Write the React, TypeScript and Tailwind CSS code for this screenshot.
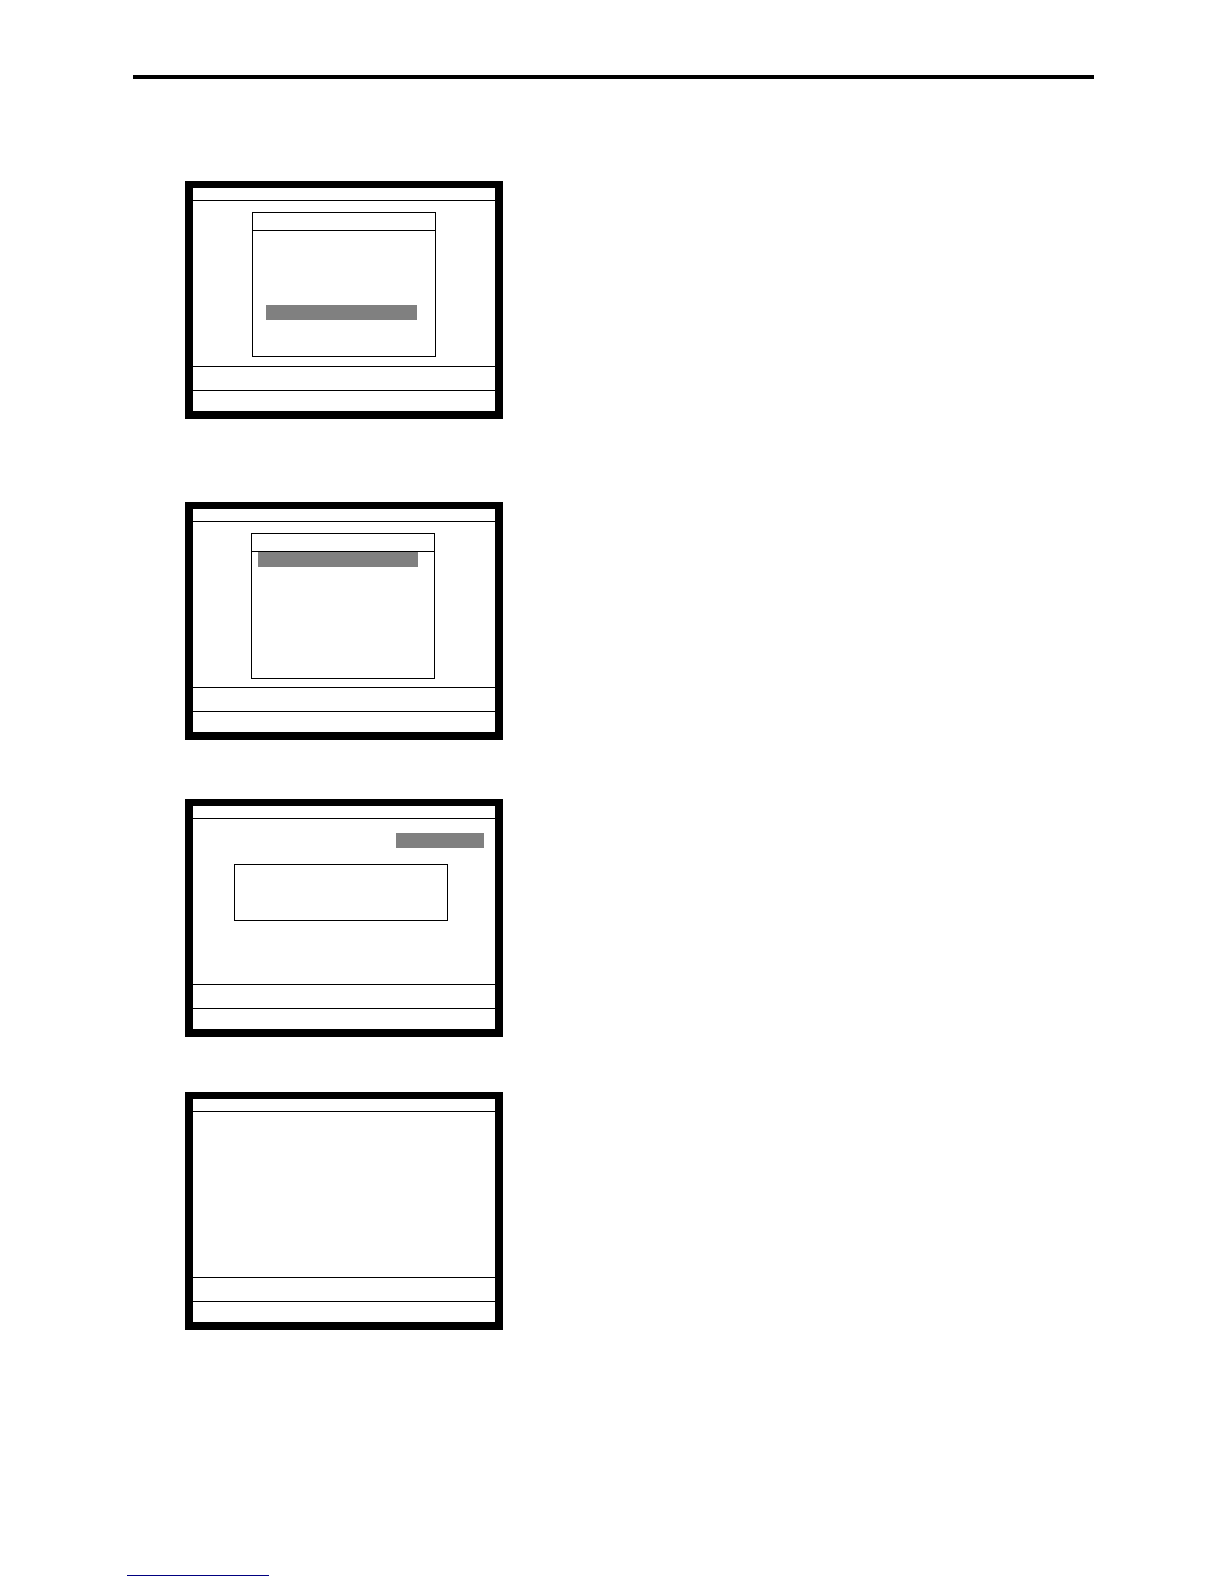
import React from 'react';

// One LCD screen drawing: thick black bezel, title strip, body, two footer strips
const Screen: React.FC<{ className?: string; children?: React.ReactNode }> = ({ className = '', children }) => (
  <div className={`shrink-0 ml-[185px] w-[318px] border-x-[8px] border-t-[7px] border-b-[8px] border-black bg-white flex flex-col ${className}`}>
    <div className="h-[13px] border-b border-black" />
    <div className="h-[165px] flex flex-col">{children}</div>
    <div className="h-[24px] border-t border-black" />
    <div className="h-[21px] border-t border-black" />
  </div>
);

const Highlight: React.FC<{ className?: string }> = ({ className = '' }) => (
  <div className={`shrink-0 h-[15px] bg-[#808080] ${className}`} />
);

export default function App() {
  return (
    <div className="w-[1224px] min-h-[1584px] bg-white flex flex-col" style={{ fontFamily: '"Liberation Sans", Arial, sans-serif' }}>
      <div className="shrink-0 mt-[75px] ml-[133px] w-[961px] h-[4px] bg-black" />

      {/* 1: menu with selection near the bottom */}
      <Screen className="mt-[102px]">
        <div className="ml-[59px] mt-[11px] w-[184px] h-[145px] border border-black flex flex-col">
          <div className="h-[18px] border-b border-black" />
          <Highlight className="ml-[13px] mt-[74px] w-[151px]" />
        </div>
      </Screen>

      {/* 2: menu with first row selected */}
      <Screen className="mt-[83px]">
        <div className="ml-[58px] mt-[11px] w-[184px] h-[146px] border border-black flex flex-col">
          <div className="h-[18px] border-b border-black" />
          <Highlight className="ml-[6px] w-[160px]" />
        </div>
      </Screen>

      {/* 3: input field with status box top-right */}
      <Screen className="mt-[59px]">
        <div className="flex justify-end pt-[14px] pr-[11px]">
          <Highlight className="w-[88px]" />
        </div>
        <div className="ml-[41px] mt-[16px] w-[214px] h-[57px] border border-black" />
      </Screen>

      {/* 4: blank screen */}
      <Screen className="mt-[55px]" />

      <div className="shrink-0 mt-[245px] ml-[127px] w-[142px] h-px bg-[#000080]" />
    </div>
  );
}
